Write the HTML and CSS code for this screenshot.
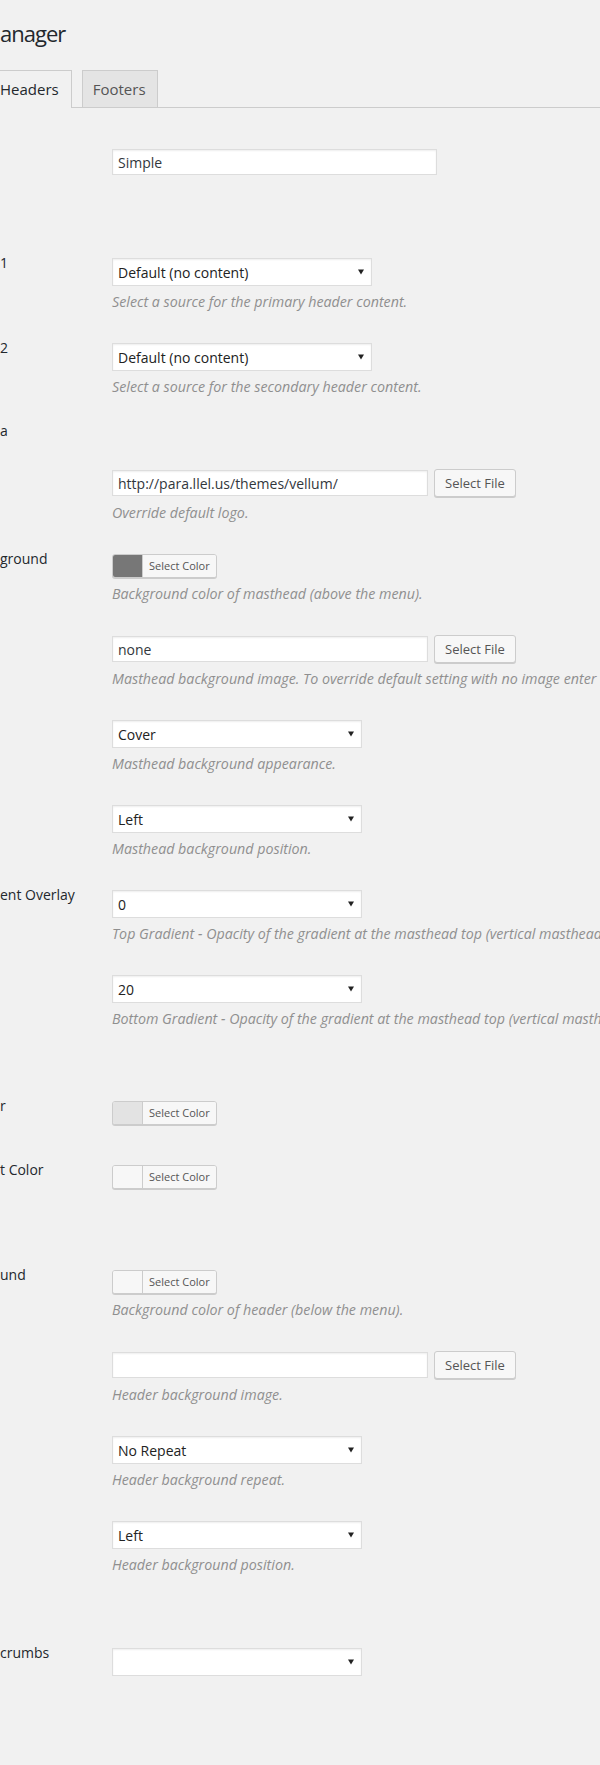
FILE: index.html
```html
<!DOCTYPE html>
<html lang="en">
<head>
<meta charset="utf-8">
<title>Header Manager</title>
<link rel="stylesheet" href="styles.css">
</head>
<body>
<div class="wrap">
  <h1 class="page-title">anager</h1>
  <nav class="tabs">
    <a class="tab tab--active">Headers</a>
    <a class="tab">Footers</a>
  </nav>

  <div class="form">
    <div class="row">
      <div class="label"></div>
      <div class="field">
        <input class="text text--wide" type="text" value="Simple">
      </div>
    </div>

    <div class="section section--lg"></div>

    <div class="row">
      <div class="label">1</div>
      <div class="field">
        <div class="select select--wide"><span>Default (no content)</span><svg class="arrow" width="6" height="6" viewBox="0 0 6 6"><path d="M0 0.5h6L3 5.5z"/></svg></div>
        <p class="desc">Select a source for the primary header content.</p>
      </div>
    </div>

    <div class="row">
      <div class="label">2</div>
      <div class="field">
        <div class="select select--wide"><span>Default (no content)</span><svg class="arrow" width="6" height="6" viewBox="0 0 6 6"><path d="M0 0.5h6L3 5.5z"/></svg></div>
        <p class="desc">Select a source for the secondary header content.</p>
      </div>
    </div>

    <div class="section"><div class="section-title">a</div></div>

    <div class="row">
      <div class="label"></div>
      <div class="field">
        <div class="file-line">
          <input class="text text--url" type="text" value="http://para.llel.us/themes/vellum/">
          <span class="button">Select File</span>
        </div>
        <p class="desc">Override default logo.</p>
      </div>
    </div>

    <div class="row">
      <div class="label">ground</div>
      <div class="field">
        <div class="picker"><span class="swatch swatch--dark"></span><span class="picker-label">Select Color</span></div>
        <p class="desc">Background color of masthead (above the menu).</p>
      </div>
    </div>

    <div class="row">
      <div class="label"></div>
      <div class="field">
        <div class="file-line">
          <input class="text text--url" type="text" value="none">
          <span class="button">Select File</span>
        </div>
        <p class="desc">Masthead background image. To override default setting with no image enter</p>
      </div>
    </div>

    <div class="row">
      <div class="label"></div>
      <div class="field">
        <div class="select"><span>Cover</span><svg class="arrow" width="6" height="6" viewBox="0 0 6 6"><path d="M0 0.5h6L3 5.5z"/></svg></div>
        <p class="desc">Masthead background appearance.</p>
      </div>
    </div>

    <div class="row">
      <div class="label"></div>
      <div class="field">
        <div class="select"><span>Left</span><svg class="arrow" width="6" height="6" viewBox="0 0 6 6"><path d="M0 0.5h6L3 5.5z"/></svg></div>
        <p class="desc">Masthead background position.</p>
      </div>
    </div>

    <div class="row">
      <div class="label">ent Overlay</div>
      <div class="field">
        <div class="select"><span>0</span><svg class="arrow" width="6" height="6" viewBox="0 0 6 6"><path d="M0 0.5h6L3 5.5z"/></svg></div>
        <p class="desc">Top Gradient - Opacity of the gradient at the masthead top (vertical masthead</p>
      </div>
    </div>

    <div class="row">
      <div class="label"></div>
      <div class="field">
        <div class="select"><span>20</span><svg class="arrow" width="6" height="6" viewBox="0 0 6 6"><path d="M0 0.5h6L3 5.5z"/></svg></div>
        <p class="desc">Bottom Gradient - Opacity of the gradient at the masthead top (vertical masth</p>
      </div>
    </div>

    <div class="section"></div>

    <div class="row">
      <div class="label">r</div>
      <div class="field field--picker">
        <div class="picker"><span class="swatch swatch--grey"></span><span class="picker-label">Select Color</span></div>
      </div>
    </div>

    <div class="row">
      <div class="label">t Color</div>
      <div class="field field--picker">
        <div class="picker"><span class="swatch swatch--light"></span><span class="picker-label">Select Color</span></div>
      </div>
    </div>

    <div class="section"></div>

    <div class="row">
      <div class="label">und</div>
      <div class="field">
        <div class="picker"><span class="swatch swatch--light"></span><span class="picker-label">Select Color</span></div>
        <p class="desc">Background color of header (below the menu).</p>
      </div>
    </div>

    <div class="row">
      <div class="label"></div>
      <div class="field">
        <div class="file-line">
          <input class="text text--url" type="text" value="">
          <span class="button">Select File</span>
        </div>
        <p class="desc">Header background image.</p>
      </div>
    </div>

    <div class="row">
      <div class="label"></div>
      <div class="field">
        <div class="select"><span>No Repeat</span><svg class="arrow" width="6" height="6" viewBox="0 0 6 6"><path d="M0 0.5h6L3 5.5z"/></svg></div>
        <p class="desc">Header background repeat.</p>
      </div>
    </div>

    <div class="row">
      <div class="label"></div>
      <div class="field">
        <div class="select"><span>Left</span><svg class="arrow" width="6" height="6" viewBox="0 0 6 6"><path d="M0 0.5h6L3 5.5z"/></svg></div>
        <p class="desc">Header background position.</p>
      </div>
    </div>

    <div class="section section--md"></div>

    <div class="row">
      <div class="label">crumbs</div>
      <div class="field">
        <div class="select"><span></span><svg class="arrow" width="6" height="6" viewBox="0 0 6 6"><path d="M0 0.5h6L3 5.5z"/></svg></div>
      </div>
    </div>
  </div>
</div>
</body>
</html>
```

FILE: styles.css
```css
html {
  background: #f1f1f1;
  overflow-x: hidden;
}

body {
  margin: 0;
  background: #f1f1f1;
  font-family: "Open Sans", "Liberation Sans", sans-serif;
  color: #23282d;
  overflow-x: hidden;
}

.wrap {
  padding-top: 19px;
}

.page-title {
  margin: 0;
  font-size: 22px;
  line-height: 29px;
  font-weight: 400;
  letter-spacing: -1px;
  color: #23282d;
  white-space: nowrap;
}

.tabs {
  display: flex;
  align-items: flex-start;
  margin-top: 22px;
  border-bottom: 1px solid #ccc;
}

.tab {
  display: block;
  box-sizing: border-box;
  height: 37px;
  padding: 0 11px 0 10px;
  margin-left: 10px;
  border: 1px solid #ccc;
  border-bottom: 0;
  background: #e4e4e4;
  color: #555;
  font-size: 15px;
  font-weight: 400;
  line-height: 36px;
  text-decoration: none;
  white-space: nowrap;
}

.tab--active {
  margin-left: -11px;
  padding-right: 12px;
  height: 38px;
  margin-bottom: -1px;
  background: #f1f1f1;
  color: #23282d;
}

.form {
  margin-top: 26px;
}

.row {
  display: flex;
  align-items: flex-start;
}

.label {
  flex: none;
  width: 112px;
  padding-top: 10px;
  font-size: 14px;
  line-height: 19px;
  font-weight: 400;
  color: #23282d;
  white-space: nowrap;
}

.field {
  flex: none;
  padding: 15px 0;
}

.field--picker {
  padding-bottom: 21px;
}

.section {
  height: 41px;
}

.section--lg {
  height: 53px;
}

.section--md {
  height: 42px;
}

.section-title {
  padding-top: 8px;
  font-size: 14px;
  line-height: 20px;
  font-weight: 400;
  color: #23282d;
}

.text {
  display: block;
  box-sizing: border-box;
  height: 26px;
  margin: 0;
  padding: 0 5px;
  border: 1px solid #ddd;
  background: #fff;
  box-shadow: inset 0 1px 2px rgba(0, 0, 0, 0.07);
  font-family: "Open Sans", "Liberation Sans", sans-serif;
  font-size: 14px;
  color: #32373c;
  outline: none;
}

.text--wide {
  width: 325px;
}

.text--url {
  width: 316px;
}

.file-line {
  display: flex;
  align-items: center;
  gap: 6px;
  height: 28px;
}

.button {
  display: block;
  box-sizing: border-box;
  height: 28px;
  padding: 0 10px;
  border: 1px solid #ccc;
  border-radius: 3px;
  background: #f7f7f7;
  box-shadow: 0 1px 0 #ccc;
  font-size: 13px;
  line-height: 26px;
  color: #555;
  white-space: nowrap;
}

.select {
  display: flex;
  align-items: center;
  justify-content: space-between;
  box-sizing: border-box;
  width: 250px;
  height: 28px;
  padding: 0 7px 0 5px;
  border: 1px solid #ddd;
  background: #fff;
  box-shadow: inset 0 1px 2px rgba(0, 0, 0, 0.07);
  font-size: 14px;
  color: #222;
  white-space: nowrap;
}

.select--wide {
  width: 260px;
}

.arrow {
  flex: none;
  fill: #222;
}

.desc {
  margin: 5px 0 0;
  font-size: 14.25px;
  line-height: 22px;
  font-style: italic;
  color: #8f8f8f;
  white-space: nowrap;
}

.picker {
  display: flex;
  width: max-content;
  box-sizing: border-box;
  height: 24px;
  margin-bottom: 4px;
  border: 1px solid #ccc;
  border-radius: 3px;
  background: #f7f7f7;
  box-shadow: 0 1px 0 #ccc;
  overflow: hidden;
}

.swatch {
  display: block;
  width: 29px;
  height: 22px;
}

.swatch--dark {
  background: #777;
}

.swatch--grey {
  background: #e3e3e3;
}

.swatch--light {
  background: #f7f7f7;
}

.picker-label {
  display: block;
  padding: 0 6px;
  border-left: 1px solid #ccc;
  background: #f7f7f7;
  font-size: 11px;
  line-height: 22px;
  color: #555;
  white-space: nowrap;
}
```
